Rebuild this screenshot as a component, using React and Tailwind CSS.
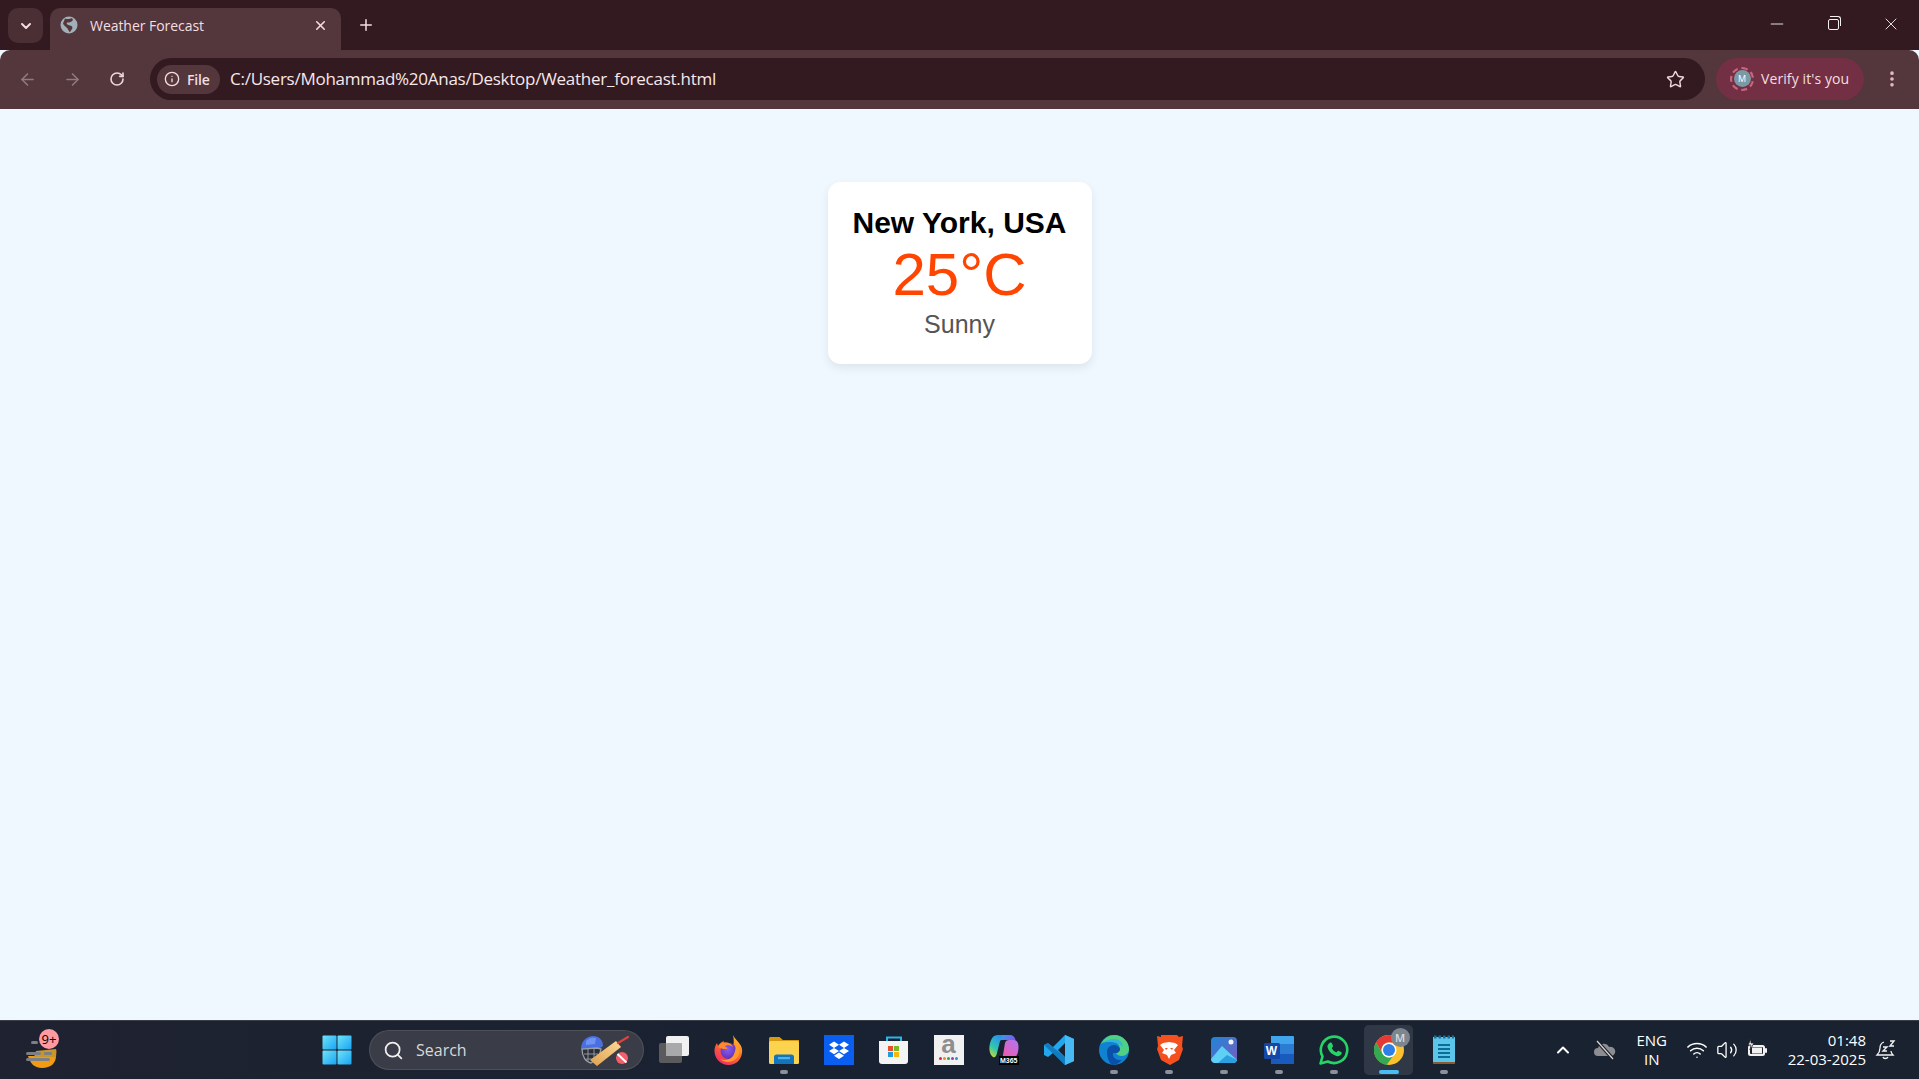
import { ArrowLeft, ArrowRight, ChevronDown, ChevronUp, EllipsisVertical, Info, Minus, Plus, RotateCw, Search, Star, Volume2, Wifi, X } from 'lucide-react'

function TabGlobe() {
  return (
    <svg viewBox="0 0 18 18" className="h-[18px] w-[18px] shrink-0">
      <circle cx="9" cy="9" r="8.500" fill="#a3b0b7" />
      <path d="M5 2.500c2 1 5 .5 7-.5l1 2c-2 2.500-4 2.500-6 2.500-1 1.500 1 2.500 3 3 2.500.5 3 2 2 3.500l-2 3c-1 0-1.500-2-2.500-3.500C6 10.500 3.500 9.500 3 7.500z" fill="#53373c" />
    </svg>
  )
}

function WeatherWidget() {
  return (
    <div className="relative h-[40px] w-[40px]">
      <svg viewBox="0 0 40 40" className="h-[40px] w-[40px]">
        <path d="M6 26h28c0 7-5 12-14 12-8 0-12-5-14-12z" fill="#f29a12" />
        <path d="M14 21l20-2c1 2 0 6 0 8H12z" fill="#c9962a" />
        <rect x="22" y="22" width="8" height="3" rx="1" fill="#7c7f86" />
        <rect x="9" y="11" width="7" height="3" rx="1.500" fill="#7c7f86" />
        <rect x="4" y="22" width="15" height="3" rx="1.500" fill="#7c7f86" />
        <rect x="4" y="28" width="24" height="3" rx="1.500" fill="#7c7f86" />
      </svg>
      <span className="absolute right-[3px] top-[-1px] flex h-[20px] w-[20px] items-center justify-center rounded-full bg-[#ff9aa2] text-[13px] leading-none text-black">9+</span>
    </div>
  )
}

function StartLogo() {
  return (
    <svg viewBox="0 0 30 30" className="h-[30px] w-[30px]">
      <defs>
        <linearGradient id="startA" x1="0" y1="0" x2="1" y2="1">
          <stop offset="0" stopColor="#6fe3f7" />
          <stop offset="1" stopColor="#19a4f5" />
        </linearGradient>
      </defs>
      <rect x="0.5" y="0.5" width="14" height="14" rx="1" fill="url(#startA)" />
      <rect x="15.5" y="0.5" width="14" height="14" rx="1" fill="url(#startA)" />
      <rect x="0.5" y="15.5" width="14" height="14" rx="1" fill="url(#startA)" />
      <rect x="15.5" y="15.5" width="14" height="14" rx="1" fill="url(#startA)" />
    </svg>
  )
}

function CricketArt() {
  return (
    <svg viewBox="0 0 50 36" className="h-[36px] w-[50px]">
      <defs>
        <linearGradient id="batFill" x1="0" y1="1" x2="1" y2="0">
          <stop offset="0" stopColor="#e0a04c" />
          <stop offset="1" stopColor="#fbd89a" />
        </linearGradient>
      </defs>
      <path d="M1 17C1 9 7 4 13 4c6 0 10 4 10 10l-4 3H6z" fill="#4a6fe0" />
      <path d="M6 9c3-3 6-4 10-3l-1 6-9 1z" fill="#6f93f2" />
      <path d="M2 17c0 8 4 13 9 14l8-6 2-8-4-1z" fill="#2b2f38" stroke="#9aa0a8" strokeWidth="1.300" />
      <path d="M4 22h14M6 27h9M8 17v12M14 17v11" stroke="#9aa0a8" strokeWidth="0.900" />
      <path d="M10 28l26-19 5 6-24 19z" fill="url(#batFill)" />
      <path d="M38 11l10-6" stroke="#d9443f" strokeWidth="2.200" strokeLinecap="round" />
      <circle cx="42" cy="26" r="6" fill="#f0606c" />
      <path d="M37.500 22l9 8.500" stroke="#fff" strokeWidth="2" />
    </svg>
  )
}

function TaskView() {
  return (
    <svg viewBox="0 0 30 30" className="h-[30px] w-[30px]">
      <rect x="0" y="8" width="23" height="20" rx="2" fill="#5b5b5d" />
      <rect x="7" y="1" width="23" height="20" rx="2" fill="#f1f1f1" />
      <rect x="7" y="8" width="16" height="13" rx="1" fill="#a9a9ab" />
    </svg>
  )
}

function FirefoxLogo() {
  return (
    <svg viewBox="0 0 30 30" className="h-[30px] w-[30px]">
      <defs>
        <linearGradient id="foxBody" x1="0.8" y1="0" x2="0.2" y2="1">
          <stop offset="0" stopColor="#ffc52e" />
          <stop offset="0.5" stopColor="#ff6a2b" />
          <stop offset="1" stopColor="#f0246e" />
        </linearGradient>
        <radialGradient id="foxCore" cx="0.45" cy="0.4" r="0.7">
          <stop offset="0" stopColor="#8a5cf0" />
          <stop offset="1" stopColor="#5a2bb0" />
        </radialGradient>
      </defs>
      <path d="M19 0c1 3 4 5 6 8 3 3 3.500 7 3 10-1 7-6 12-13.500 12C7 30 1 24.500 .5 16.500.3 13 1.500 10 3 8l1 3c1-2 3-4 6-5-1 2 0 3 1 4 3-.5 6 0 8 2 1-4 1-8 0-12z" fill="url(#foxBody)" />
      <circle cx="14.500" cy="16" r="8" fill="url(#foxCore)" />
      <path d="M4 12c2-4 7-6 11-4 2 1 3 2 4 4-3-2-6-2-8-1 1 1 2 2 3 2-2 2-6 1-10-1z" fill="#ff8a2b" />
      <path d="M21 7c3 3 5 7 4 12-1 4-5 8-11 8-3 0-6-1-8-3 5 2 10 1 13-3 3-5 3-10 2-14z" fill="#ff9a2b" />
    </svg>
  )
}

function FolderLogo() {
  return (
    <svg viewBox="0 0 30 30" className="h-[30px] w-[30px]">
      <path d="M0 3.5C0 2.7.7 2 1.500 2h9l3.500 3H30v6H0z" fill="#d69a12" />
      <rect x="0" y="6" width="30" height="23" rx="1.500" fill="#fcd34f" />
      <path d="M5 29v-7c0-1.500 1-2.500 2.500-2.500h15c1.500 0 2.500 1 2.500 2.500v7z" fill="#1274bd" />
      <rect x="9" y="22" width="12" height="2.200" fill="#4fb3e8" />
    </svg>
  )
}

function DropboxLogo() {
  return (
    <svg viewBox="0 0 30 30" className="h-[30px] w-[30px]">
      <rect width="30" height="30" fill="#0b5ff0" />
      <path d="M10 6.500l5 3.200-5 3.200-5-3.200zM20 6.500l5 3.200-5 3.200-5-3.200zM10 12.900l5 3.200-5 3.200-5-3.200zM20 12.900l5 3.200-5 3.200-5-3.200zM15 17.500l5 3.200-5 3.200-5-3.200z" fill="#fff" />
    </svg>
  )
}

function StoreLogo() {
  return (
    <svg viewBox="0 0 30 30" className="h-[30px] w-[30px]">
      <path d="M8 8V2.500h14V8" fill="none" stroke="#29b6e8" strokeWidth="2" />
      <path d="M0 6h29v20c0 2-1 3-3 3H3c-2 0-3-1-3-3z" fill="#f4f4f4" />
      <rect x="9" y="11" width="5" height="5" fill="#e8502a" />
      <rect x="15" y="11" width="5" height="5" fill="#7bb82a" />
      <rect x="9" y="17" width="5" height="5" fill="#1f9be0" />
      <rect x="15" y="17" width="5" height="5" fill="#f9b60f" />
    </svg>
  )
}

function AmazonTile() {
  return (
    <div className="flex h-[30px] w-[30px] flex-col items-center bg-[#f1f1f1]">
      <span className="mt-[-3px] font-['Liberation_Sans',sans-serif] text-[26px] font-bold leading-[25px] text-[#8e8e8e]">a</span>
      <div className="flex gap-[1px]">
        <span className="h-[3px] w-[3px] rounded-full bg-[#e9242b]" />
        <span className="h-[3px] w-[3px] rounded-full bg-[#f58a1f]" />
        <span className="h-[3px] w-[3px] rounded-full bg-[#26a65b]" />
        <span className="h-[3px] w-[3px] rounded-full bg-[#8e44ad]" />
        <span className="h-[3px] w-[3px] rounded-full bg-[#2a8fd8]" />
      </div>
    </div>
  )
}

function M365Logo() {
  return (
    <div className="relative h-[30px] w-[30px]">
      <svg viewBox="0 0 30 30" className="h-[30px] w-[30px]">
        <defs>
          <linearGradient id="mTop" x1="0" y1="0" x2="1" y2="0.300">
            <stop offset="0" stopColor="#28a8ea" />
            <stop offset="1" stopColor="#7a5be8" />
          </linearGradient>
          <linearGradient id="mLeft" x1="0.700" y1="0" x2="0.200" y2="1">
            <stop offset="0" stopColor="#2c8cf0" />
            <stop offset="0.600" stopColor="#2fc6b0" />
            <stop offset="1" stopColor="#c4d83a" />
          </linearGradient>
          <linearGradient id="mRight" x1="0.800" y1="0" x2="0.200" y2="1">
            <stop offset="0" stopColor="#b574f0" />
            <stop offset="1" stopColor="#f05aa8" />
          </linearGradient>
        </defs>
        <path d="M9 0h12c3 0 5 2 5.500 5H13C11 5 10 7 9 9z" fill="url(#mTop)" />
        <path d="M5 1c2-1 3-1 5-1h5c-2 0-3 2-3.500 4L8 18c-.5 3-2 5-4 4-3-2-4-7-3.500-11C1 7 2.500 3 5 1z" fill="url(#mLeft)" />
        <path d="M16 8c.5-2 2-3 4-3h5c3 0 4.500 3 4.500 7 0 6-2 11-6 12h-8c-2 0-2-2-1.500-4z" fill="url(#mRight)" />
      </svg>
      <span className="absolute bottom-0 right-0 bg-black px-[1px] font-['Liberation_Sans',sans-serif] text-[7px] font-bold leading-[9px] text-white">M365</span>
    </div>
  )
}

function VsCodeLogo() {
  return (
    <svg viewBox="0 0 30 30" className="h-[30px] w-[30px]">
      <path d="M21 0l9 4v22l-9 4-12-12-5 4-4-2V10l4-2 5 4zM21 8l-7 7 7 7z" fill="#22a7ef" />
      <path d="M21 0l9 4v22l-9 4z" fill="#47b9f5" />
      <path d="M0 10l4-2 17 14v8z" fill="#0c6db3" opacity="0.75" />
    </svg>
  )
}

function EdgeLogo() {
  return (
    <svg viewBox="0 0 30 30" className="h-[30px] w-[30px]">
      <circle cx="15" cy="15" r="15" fill="#0f83cf" />
      <path d="M2 9c3-6 8-9 13-9 9 0 15 7 15 14 0 4-3 7-7 7-3 0-5-1-6-3 2 0 4-2 4-4 0-5-5-8-9-8-5 0-8 1-10 3z" fill="#4fd084" />
      <path d="M4 8c3-3 7-4 11-4 5 0 9 3 9 8-4-5-15-6-20-4z" fill="#33b4d8" />
      <path d="M8 17c0-4 3-7 7-7 3 0 5 2 6 4 0 2-2 4-4 4h-3c-1 4 3 8 9 7-3 3-6 5-10 5-3-2-5-8-5-13z" fill="#0a4fa8" />
    </svg>
  )
}

function BraveLogo() {
  return (
    <svg viewBox="0 0 30 30" className="h-[30px] w-[30px]">
      <path d="M7 0h16l2 2 4-1-1 10 1 3-4 11-9 5-9-5L3 14l1-3-1-10 4 1z" fill="#f4511e" />
      <path d="M9 8l6-1 6 1 3 2-4 5 2 3-5 2-2 4-2-4-5-2 2-3-4-5z" fill="#fff" />
      <path d="M11 13h3l-2 2zM19 13h-3l2 2z" fill="#f4511e" />
    </svg>
  )
}

function PhotosLogo() {
  return (
    <svg viewBox="0 0 30 30" className="h-[30px] w-[30px]">
      <defs>
        <linearGradient id="photosBg" x1="0" y1="0" x2="1" y2="1">
          <stop offset="0" stopColor="#1d86d8" />
          <stop offset="1" stopColor="#7a5bc0" />
        </linearGradient>
      </defs>
      <rect x="2" y="2" width="26" height="26" rx="4" fill="url(#photosBg)" />
      <circle cx="22" cy="7" r="2.500" fill="#f4f4f4" />
      <path d="M2 24l11-13 15 14c-1 2-2 3-4 3H6c-2 0-4-2-4-4z" fill="#5ed0f5" />
      <path d="M9 28l9-8 10 5c-1 2-2 3-4 3z" fill="#2b9fe0" />
    </svg>
  )
}

function WordLogo() {
  return (
    <div className="relative h-[30px] w-[30px]">
      <svg viewBox="0 0 30 30" className="h-[30px] w-[30px]">
        <path d="M7 1h22a1 1 0 0 1 1 1v7H7z" fill="#41a5ee" />
        <rect x="7" y="9" width="23" height="10" fill="#2b7cd3" />
        <rect x="7" y="19" width="23" height="10" fill="#185abd" />
        <rect x="0" y="8" width="16" height="16" rx="1.500" fill="#1448a8" />
      </svg>
      <span className="absolute left-0 top-[8px] flex h-[16px] w-[16px] items-center justify-center font-['Liberation_Sans',sans-serif] text-[12px] font-bold text-white">W</span>
    </div>
  )
}

function WhatsAppLogo() {
  return (
    <svg viewBox="0 0 30 30" className="h-[30px] w-[30px]">
      <path d="M1.500 28.500l2-7.200A13.200 13.200 0 1 1 8.800 26.500z" fill="none" stroke="#25d366" strokeWidth="2.600" strokeLinejoin="round" />
      <path d="M10.500 8c1-.8 2-.5 2.400.3l1 2.200c.3.600 0 1.100-.8 2-.300.400-.300.700 0 1.200.900 1.500 2 2.600 3.700 3.400.500.200.800.200 1.100-.2.900-1 1.300-1.300 2-1l2.200 1.100c.700.400.800 1.200.200 2.300-1 1.600-3 2.200-5 1.600-4.300-1.200-7.600-4.500-8.700-8.300-.500-1.800.400-3.500 1.900-4.600z" fill="#25d366" />
    </svg>
  )
}

function ChromeLogo() {
  return (
    <div className="relative h-[30px] w-[30px]">
      <svg viewBox="0 0 30 30" className="h-[30px] w-[30px]">
        <circle cx="15" cy="15" r="15" fill="#fbc02d" />
        <path d="M15 0a15 15 0 0 1 13 7.500H15A7.500 7.500 0 0 0 8.500 18.800L2 7.500A15 15 0 0 1 15 0z" fill="#e53935" />
        <path d="M2 7.500l6.500 11.300A7.500 7.500 0 0 0 18.800 21.500L12.500 30A15 15 0 0 1 2 7.500z" fill="#34a853" />
        <circle cx="15" cy="15" r="7.500" fill="#fff" />
        <circle cx="15" cy="15" r="6" fill="#2f7fe8" />
      </svg>
      <span className="absolute right-[-6px] top-[-7px] flex h-[19px] w-[19px] items-center justify-center rounded-full bg-[#7c868f] font-['Open_Sans',sans-serif] text-[11px] font-semibold leading-none text-[#d9dde0]">M</span>
    </div>
  )
}

function NotepadLogo() {
  return (
    <svg viewBox="0 0 30 30" className="h-[30px] w-[30px]">
      <rect x="4" y="2" width="22" height="27" fill="#5cc6ea" />
      <rect x="4" y="27" width="22" height="2" fill="#8a5a32" />
      <path d="M5 2h20" stroke="#1b6f97" strokeWidth="3" strokeDasharray="2.500 2" />
      <path d="M9 10h12M9 14h12M9 18h12M9 22h12" stroke="#0e6d96" strokeWidth="2" />
    </svg>
  )
}

const TASKBAR_APPS = [
  { id: 'taskview', icon: <TaskView /> },
  { id: 'firefox', icon: <FirefoxLogo /> },
  { id: 'folder', icon: <FolderLogo />, running: true },
  { id: 'dropbox', icon: <DropboxLogo /> },
  { id: 'store', icon: <StoreLogo /> },
  { id: 'amazon', icon: <AmazonTile /> },
  { id: 'm365', icon: <M365Logo /> },
  { id: 'vscode', icon: <VsCodeLogo /> },
  { id: 'edge', icon: <EdgeLogo />, running: true },
  { id: 'brave', icon: <BraveLogo />, running: true },
  { id: 'photos', icon: <PhotosLogo />, running: true },
  { id: 'word', icon: <WordLogo />, running: true },
  { id: 'whatsapp', icon: <WhatsAppLogo />, running: true },
  { id: 'chrome', icon: <ChromeLogo />, active: true },
  { id: 'notepad', icon: <NotepadLogo />, running: true },
]

function TaskbarApp({ app }) {
  return (
    <div className={`relative flex h-[50px] items-center justify-center ${app.active ? 'mx-[3px] w-[49px] rounded-[5px] bg-white/10' : 'w-[55px]'}`}>
      {app.icon}
      {app.running ? <span className="absolute bottom-[1px] h-[4px] w-[8px] rounded-full bg-[#8b9099]" /> : null}
      {app.active ? <span className="absolute bottom-[1px] h-[4px] w-[20px] rounded-full bg-[#47bdf5]" /> : null}
    </div>
  )
}

function CloudOff() {
  return (
    <svg viewBox="0 0 22 22" className="h-[22px] w-[22px]">
      <path d="M4 17a4 4 0 0 1 0-8 6 6 0 0 1 11-1 4.500 4.500 0 0 1 3 9z" fill="#8b8d91" />
      <path d="M3 2l16 18" stroke="#20222b" strokeWidth="3.500" />
      <path d="M3 2l16 18" stroke="#d8d8da" strokeWidth="1.200" />
    </svg>
  )
}

function BatteryCharging() {
  return (
    <svg viewBox="0 0 22 22" className="h-[22px] w-[22px]">
      <rect x="2" y="6" width="17" height="11" rx="2.500" fill="#f2f2f2" />
      <rect x="19" y="9" width="2" height="5" rx="1" fill="#f2f2f2" />
      <rect x="4" y="8" width="13" height="7" rx="1" fill="#20222b" />
      <rect x="6" y="8.500" width="10" height="6" fill="#f2f2f2" />
      <path d="M5 0L2 6h3l-1 5 4-7H5z" fill="#f2f2f2" stroke="#20222b" strokeWidth="0.800" />
    </svg>
  )
}

function BellSnooze() {
  return (
    <svg viewBox="0 0 22 22" className="h-[22px] w-[22px]" fill="none" stroke="#f2f2f2" strokeWidth="1.300">
      <path d="M9 3C6 4 5 6 5 9c0 3-1 5-3 7h16c-1-1-2-2-2-4" />
      <path d="M8 18c.5 2 4 2 5 0" />
      <path d="M8 8h4l-4 4h4M15 2h4l-4 5h4" strokeWidth="1.400" />
    </svg>
  )
}

function App() {
  return (
    <div className="flex h-screen w-full flex-col overflow-hidden bg-[#f0f8ff] font-['Open_Sans',sans-serif]">
      <div className="flex h-[50px] shrink-0 bg-[#321a20]">
        <button type="button" className="ml-[8px] mt-[8px] flex h-[35px] w-[35px] items-center justify-center rounded-[10px] bg-[#4a2f35] text-[#f5dde0]">
          <ChevronDown size={16} strokeWidth={3} />
        </button>
        <div className="ml-[7px] mt-[8px] flex h-[42px] w-[291px] items-center rounded-t-[10px] bg-[#53373c] pb-[8px] pl-[10px] pr-[13px] text-[#f5dde0]">
          <TabGlobe />
          <span className="ml-[12px] flex-1 text-[14px] tracking-[-0.05px]">Weather Forecast</span>
          <X size={15} strokeWidth={2.5} />
        </div>
        <button type="button" className="ml-[7px] mt-[7px] flex h-[36px] w-[36px] items-center justify-center text-[#f5dde0]">
          <Plus size={18} strokeWidth={2} />
        </button>
        <div className="ml-auto flex text-[#f4f0f0]">
          <div className="flex h-[48px] w-[57px] items-center justify-center"><Minus size={20} strokeWidth={1.1} /></div>
          <div className="flex h-[48px] w-[57px] items-center justify-center">
            <div className="relative h-[11px] w-[11px] rounded-[2px] border border-[#f4f0f0] before:absolute before:left-[1px] before:top-[-4px] before:h-[10px] before:w-[11px] before:rounded-tr-[3px] before:border-r before:border-t before:border-[#f4f0f0]" />
          </div>
          <div className="flex h-[48px] w-[57px] items-center justify-center"><X size={20} strokeWidth={1.1} /></div>
        </div>
      </div>

      <div className="flex h-[59px] shrink-0 items-center rounded-t-[10px] bg-[#53373c] pb-[1px] pl-[9px] pr-[9px]">
        <div className="flex gap-[9px]">
          <div className="flex h-[36px] w-[36px] items-center justify-center text-[#8f7a7e]"><ArrowLeft size={19} /></div>
          <div className="flex h-[36px] w-[36px] items-center justify-center text-[#8f7a7e]"><ArrowRight size={19} /></div>
          <div className="flex h-[36px] w-[36px] items-center justify-center text-[#eed7da]"><RotateCw size={16} strokeWidth={2.4} /></div>
        </div>
        <div className="ml-[15px] flex h-[42px] flex-1 items-center rounded-full bg-[#321a20] pl-[7px] pr-[20px]">
          <div className="flex h-[29px] w-[63px] items-center rounded-full bg-[#53373c] pl-[7px] text-[#f5dde0]">
            <Info size={16} />
            <span className="ml-[7px] text-[14px] font-semibold tracking-[-0.2px]">File</span>
          </div>
          <span className="ml-[10px] flex-1 text-[17px] tracking-[-0.26px] text-[#f8e8ea]">C:/Users/Mohammad%20Anas/Desktop/Weather_forecast.html</span>
          <Star size={19} strokeWidth={1.8} className="text-[#eed7da]" />
        </div>
        <div className="ml-[11px] flex h-[42px] w-[148px] items-center rounded-full bg-[#733044] pb-[1px] pl-[14px] text-[#f5dde0]">
          <div className="flex h-[24px] w-[24px] items-center justify-center rounded-full border-2 border-dashed border-[#c8667e]">
            <span className="flex h-[17px] w-[17px] shrink-0 items-center justify-center rounded-full bg-[#7c9aa5] text-[9px] leading-none text-white">M</span>
          </div>
          <span className="ml-[7px] text-[14px] tracking-[0.1px]">Verify it's you</span>
        </div>
        <div className="ml-[10px] flex h-[36px] w-[36px] items-center justify-center text-[#e5b9c2]">
          <EllipsisVertical size={20} strokeWidth={2.4} />
        </div>
      </div>

      <main className="flex flex-1 justify-center pt-[73px] font-['Liberation_Sans',sans-serif]">
        <div className="h-[182px] w-[264px] rounded-[12.5px] bg-white px-[25px] pt-[24px] text-center shadow-[0_4px_10px_rgba(0,0,0,0.08)]">
          <h2 className="text-[30px] font-bold leading-[34px] text-black">New York, USA</h2>
          <p className="text-[60px] leading-[69px] text-[#ff4500]">25°C</p>
          <p className="mt-[1px] text-[25px] leading-[29px] text-[#555555]">Sunny</p>
        </div>
      </main>

      <footer className="flex h-[59px] shrink-0 items-center border-t border-[#3b3e45] bg-gradient-to-r from-[#1f2230] via-[#182232] to-[#1a2230] text-white">
        <div className="ml-[22px] w-[300px] shrink-0"><WeatherWidget /></div>
        <div className="flex h-[30px] w-[30px] shrink-0 items-center justify-center">
          <StartLogo />
        </div>
        <div className="ml-[17px] flex h-[40px] w-[275px] shrink-0 items-center rounded-full border border-white/10 bg-[#3a3d47] pl-[13px] pr-[13px]">
          <Search size={21} strokeWidth={2} className="text-[#f0f0f0]" />
          <span className="ml-[12px] flex-1 text-[16px] text-[#d8d8da]">Search</span>
          <CricketArt />
        </div>
        <div className="ml-[2px] flex shrink-0">
          {TASKBAR_APPS.map((app) => (
            <TaskbarApp key={app.id} app={app} />
          ))}
        </div>
        <div className="ml-auto flex items-center pr-[22px]">
          <ChevronUp size={20} strokeWidth={2.4} className="mr-[21px] text-white" />
          <CloudOff />
          <div className="ml-[12px] w-[48px] text-center text-[15px] leading-[19px]">
            <p>ENG</p>
            <p>IN</p>
          </div>
          <div className="ml-[10px] flex items-center gap-[8px]">
            <Wifi size={22} strokeWidth={1.6} />
            <Volume2 size={22} strokeWidth={1.4} />
            <BatteryCharging />
          </div>
          <div className="ml-[20px] text-right text-[15px] leading-[19px]">
            <p>01:48</p>
            <p>22-03-2025</p>
          </div>
          <div className="ml-[9px]"><BellSnooze /></div>
        </div>
      </footer>
    </div>
  )
}

export default App
